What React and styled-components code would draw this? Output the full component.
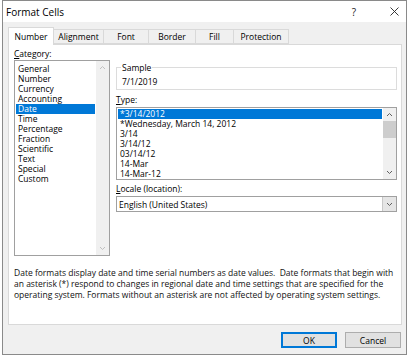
import React from 'react';
import styled, { createGlobalStyle } from 'styled-components';

const GlobalStyle = createGlobalStyle`
  body {
    margin: 0;
    background: #ffffff;
    font-family: "Open Sans", "Noto Sans", sans-serif;
    color: #000;
  }
`;

const Window = styled.div`
  box-sizing: border-box;
  width: 405px;
  height: 355px;
  margin-left: 2px;
  border: 1px solid #8a8a8a;
  background: #f0f0f0;
  display: flex;
  flex-direction: column;
  font-size: 8.5px;
`;

const TitleBar = styled.div`
  height: 21px;
  background: #ffffff;
  display: flex;
  align-items: center;
  gap: 16px;
  padding-left: 3px;
`;

const Title = styled.div`
  flex: 1;
  font-size: 10px;
`;

const TitleButton = styled.div`
  width: 24px;
  height: 21px;
  display: flex;
  align-items: center;
  justify-content: center;
  font-size: 10px;
  color: #222;
`;

const TabStrip = styled.div`
  display: flex;
  align-items: flex-end;
  height: 17px;
  margin-top: 5px;
  padding-left: 5px;
`;

const Tab = styled.div`
  box-sizing: border-box;
  width: ${p => p.$w}px;
  height: ${p => (p.$active ? 18 : 15)}px;
  margin-bottom: ${p => (p.$active ? -1 : 0)}px;
  margin-left: ${p => (p.$first ? 0 : -1)}px;
  border: 1px solid #d9d9d9;
  border-bottom: ${p => (p.$active ? 'none' : '1px solid #d9d9d9')};
  background: ${p => (p.$active ? '#ffffff' : '#f0f0f0')};
  display: flex;
  align-items: center;
  justify-content: center;
  padding-bottom: ${p => (p.$active ? 1 : 0)}px;
  position: relative;
  z-index: ${p => (p.$active ? 1 : 0)};
`;

const Panel = styled.div`
  box-sizing: border-box;
  height: 281px;
  margin: 0 4px 0 5px;
  border: 1px solid #d9d9d9;
  background: #ffffff;
  padding: 3px 4px 0 5px;
  display: flex;
  flex-direction: column;
`;

const TopRow = styled.div`
  display: flex;
  gap: 6px;
`;

const LeftCol = styled.div`
  width: 96px;
  display: flex;
  flex-direction: column;
`;

const RightCol = styled.div`
  flex: 1;
  display: flex;
  flex-direction: column;
  padding-top: 14px;
`;

const Label = styled.div`
  line-height: 11px;
  margin-top: ${p => p.$mt || 0}px;
  margin-bottom: ${p => p.$mb || 0}px;
`;

const ListBox = styled.div`
  box-sizing: border-box;
  height: ${p => p.$h}px;
  border: 1px solid #a0a0a0;
  display: flex;
`;

const Items = styled.div`
  flex: 1;
  min-width: 0;
  padding: ${p => p.$pt}px 1px 0 1px;
`;

const Item = styled.div`
  height: 10px;
  line-height: 10px;
  padding-left: 2px;
  white-space: nowrap;
  background: ${p => (p.$selected ? '#0078d7' : 'transparent')};
  color: ${p => (p.$selected ? '#ffffff' : '#000')};
`;

const ScrollBar = styled.div`
  width: 13px;
  background: #f0f0f0;
  display: flex;
  flex-direction: column;
  align-items: center;
`;

const ScrollArrow = styled.div`
  height: 13px;
  width: 13px;
  display: flex;
  align-items: center;
  justify-content: center;
`;

const Track = styled.div`
  flex: 1;
  width: 100%;
`;

const Thumb = styled.div`
  width: 100%;
  height: 17px;
  background: #cdcdcd;
`;

const Group = styled.fieldset`
  margin: 0;
  min-width: 0;
  padding: 4px 5px 2px 5px;
  border: 1px solid #dcdcdc;
  legend {
    padding: 0 1px;
    margin-left: -1px;
    line-height: 11px;
  }
`;

const SampleValue = styled.div`
  line-height: 10px;
`;

const Select = styled.div`
  box-sizing: border-box;
  height: 16px;
  border: 1px solid #a0a0a0;
  display: flex;
  align-items: stretch;
`;

const SelectValue = styled.div`
  flex: 1;
  display: flex;
  align-items: center;
  padding-left: 2px;
`;

const SelectButton = styled.div`
  width: 13px;
  background: #e5e5e5;
  border-left: 1px solid #c8c8c8;
  display: flex;
  align-items: center;
  justify-content: center;
`;

const Description = styled.div`
  margin-top: 11px;
  line-height: 11px;
  color: #111;
  white-space: nowrap;
`;

const Footer = styled.div`
  display: flex;
  justify-content: flex-end;
  gap: 8px;
  padding: 7px 5px 0 0;
`;

const Button = styled.div`
  box-sizing: border-box;
  width: 56px;
  height: 16px;
  background: #e1e1e1;
  border: 1px solid ${p => (p.$default ? '#0078d7' : '#adadad')};
  box-shadow: ${p => (p.$default ? 'inset 0 0 0 1px #0078d7' : 'none')};
  display: flex;
  align-items: center;
  justify-content: center;
`;

const Chevron = ({ up, color = '#606060' }) => (
  <svg width="7" height="5" viewBox="0 0 7 5">
    <polyline
      points={up ? '1,4 3.5,1.5 6,4' : '1,1 3.5,3.5 6,1'}
      fill="none"
      stroke={color}
      strokeWidth="1"
    />
  </svg>
);

const CloseIcon = () => (
  <svg width="9" height="9" viewBox="0 0 9 9">
    <path d="M0.5 0.5 L8.5 8.5 M8.5 0.5 L0.5 8.5" stroke="#222" strokeWidth="0.9" />
  </svg>
);

const tabs = [
  { name: 'Number', w: 46 },
  { name: 'Alignment', w: 51 },
  { name: 'Font', w: 46 },
  { name: 'Border', w: 48 },
  { name: 'Fill', w: 39 },
  { name: 'Protection', w: 56 },
];

const categories = [
  'General', 'Number', 'Currency', 'Accounting', 'Date', 'Time', 'Percentage',
  'Fraction', 'Scientific', 'Text', 'Special', 'Custom',
];

const types = [
  '*3/14/2012', '*Wednesday, March 14, 2012', '3/14', '3/14/12', '03/14/12',
  '14-Mar', '14-Mar-12',
];

export default function App() {
  return (
    <>
      <GlobalStyle />
      <Window>
        <TitleBar>
          <Title>Format Cells</Title>
          <TitleButton>?</TitleButton>
          <TitleButton><CloseIcon /></TitleButton>
        </TitleBar>

        <TabStrip>
          {tabs.map((t, i) => (
            <Tab key={t.name} $w={t.w} $active={i === 0} $first={i === 0}>{t.name}</Tab>
          ))}
        </TabStrip>

        <Panel>
          <TopRow>
            <LeftCol>
              <Label $mb={1}><u>C</u>ategory:</Label>
              <ListBox $h={196}>
                <Items $pt={3}>
                  {categories.map(c => (
                    <Item key={c} $selected={c === 'Date'}>{c}</Item>
                  ))}
                </Items>
                <ScrollBar>
                  <ScrollArrow><Chevron up color="#c0c0c0" /></ScrollArrow>
                  <Track />
                  <ScrollArrow><Chevron color="#c0c0c0" /></ScrollArrow>
                </ScrollBar>
              </ListBox>
            </LeftCol>

            <RightCol>
              <Group>
                <legend>Sample</legend>
                <SampleValue>7/1/2019</SampleValue>
              </Group>

              <Label $mt={4} $mb={2}><u>T</u>ype:</Label>
              <ListBox $h={73}>
                <Items $pt={1}>
                  {types.map((t, i) => (
                    <Item key={t} $selected={i === 0}>{t}</Item>
                  ))}
                </Items>
                <ScrollBar>
                  <ScrollArrow><Chevron up /></ScrollArrow>
                  <Track><Thumb /></Track>
                  <ScrollArrow><Chevron /></ScrollArrow>
                </ScrollBar>
              </ListBox>

              <Label $mt={3} $mb={2}><u>L</u>ocale (location):</Label>
              <Select>
                <SelectValue>English (United States)</SelectValue>
                <SelectButton><Chevron /></SelectButton>
              </Select>
            </RightCol>
          </TopRow>

          <Description>
            Date formats display date and time serial numbers as date values.&nbsp; Date formats that begin with<br />
            an asterisk (*) respond to changes in regional date and time settings that are specified for the<br />
            operating system. Formats without an asterisk are not affected by operating system settings.
          </Description>
        </Panel>

        <Footer>
          <Button $default>OK</Button>
          <Button>Cancel</Button>
        </Footer>
      </Window>
    </>
  );
}
